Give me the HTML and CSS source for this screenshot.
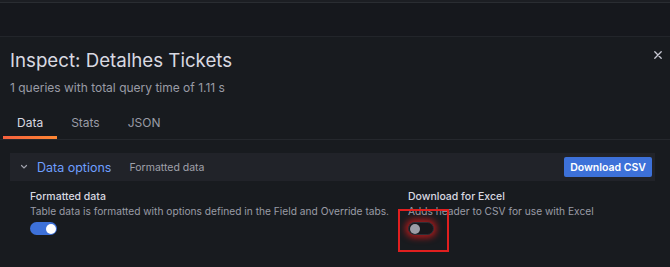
FILE: index.html
```html
<!DOCTYPE html>
<html>
<head>
    <title>Inspect: Detalhes Tickets</title>
    <meta name="viewport" content="width=device-width, initial-scale=1">
    <link rel="stylesheet" href="styles.css">
</head>
<body>
    <div class="topbar">
        <div class="topbar-line"></div>
    </div>

    <div class="drawer">
        <div class="drawer-header">
            <div>
                <h1 class="drawer-title">Inspect: Detalhes Tickets</h1>
                <div class="drawer-subtitle">1 queries with total query time of 1.11 s</div>
            </div>
            <button class="close-btn" title="Close">
                <svg width="8" height="8" viewBox="0 0 8 8">
                    <path d="M0.8 0.8 L7.2 7.2 M7.2 0.8 L0.8 7.2" stroke="#c8c9d3" stroke-width="1.3" stroke-linecap="round"/>
                </svg>
            </button>
        </div>

        <div class="tabs">
            <div class="tab active">Data</div>
            <div class="tab">Stats</div>
            <div class="tab">JSON</div>
        </div>

        <div class="content">
            <div class="options-bar">
                <svg class="chevron" width="8" height="6" viewBox="0 0 8 6">
                    <path d="M1.5 1.5 L4 4 L6.5 1.5" stroke="#9fa1ab" stroke-width="1.2" fill="none" stroke-linecap="round"/>
                </svg>
                <span class="options-title">Data options</span>
                <span class="options-summary">Formatted data</span>
                <button class="btn-primary">Download CSV</button>
            </div>

            <div class="fields">
                <div class="field">
                    <div class="field-label">Formatted data</div>
                    <div class="field-desc">Table data is formatted with options defined in the Field and Override tabs.</div>
                    <span class="switch on"><span class="knob"></span></span>
                </div>
                <div class="field field-last">
                    <div class="field-label">Download for Excel</div>
                    <div class="field-desc">Adds header to CSV for use with Excel</div>
                    <span class="switch off"><span class="knob"></span></span>
                    <span class="highlight-box"></span>
                </div>
            </div>
        </div>
    </div>
</body>
</html>
```

FILE: styles.css
```css
body {
    margin: 0;
    background: #111217;
    font-family: Inter, "Noto Sans", sans-serif;
    color: #ccccdc;
    height: 267px;
    overflow: hidden;
}
.topbar {
    height: 36px;
    background: #16181d;
}
.topbar-line {
    height: 2px;
    background: #1c1e23;
    border-bottom: 1px solid #2a2d32;
}
.drawer {
    background: #181b1f;
    border-top: 1px solid #22252a;
    height: 230px;
}
.drawer-header {
    display: flex;
    justify-content: space-between;
    padding: 11px 8px 0 10px;
}
.drawer-title {
    margin: 0;
    font-size: 18.7px;
    font-weight: 400;
    line-height: 26px;
    color: #d8d9e1;
}
.drawer-subtitle {
    margin-top: 6px;
    font-size: 12px;
    line-height: 16px;
    color: #9a9ba6;
}
.close-btn {
    background: none;
    border: none;
    padding: 0;
    margin-top: 3px;
    height: 8px;
    line-height: 0;
    cursor: pointer;
}
.tabs {
    display: flex;
    margin-top: 12px;
    border-bottom: 1px solid #25282d;
}
.tab {
    font-size: 12px;
    line-height: 16px;
    padding: 7px 14px 8px 14px;
    color: #9a9ba6;
}
.tab:first-child {
    margin-left: 3px;
}
.tab.active {
    color: #d8d9e1;
    padding-bottom: 5px;
    border-bottom: 3px solid #ff6a33;
    border-image: linear-gradient(90deg, #f55f3e, #ff8833) 1;
}
.content {
    padding: 13px 15px 0 10px;
}
.options-bar {
    display: flex;
    align-items: center;
    height: 28px;
    background: #212329;
    padding: 0 3px 0 10px;
}
.chevron {
    margin-right: 9px;
}
.options-title {
    font-size: 12.5px;
    color: #6e9fff;
    margin-right: 18px;
}
.options-summary {
    font-size: 10.5px;
    color: #a0a1ab;
    flex: 1;
}
.btn-primary {
    background: #3d71d9;
    color: #fff;
    border: none;
    border-radius: 2px;
    font-family: Inter, "Noto Sans", sans-serif;
    font-size: 10.5px;
    font-weight: 600;
    height: 20px;
    width: 88px;
    padding: 0;
}
.fields {
    display: flex;
    padding: 9px 0 0 20px;
}
.field {
    position: relative;
    flex: 0 0 378px;
}
.field-last {
    flex: 1;
    min-width: 0;
}
.field-desc {
    font-size: 10.2px;
    line-height: 14px;
    color: #9a9ba6;
    white-space: nowrap;
}
.field-label {
    font-size: 10.5px;
    font-weight: 500;
    line-height: 14px;
    color: #d8d9e1;
}
.switch {
    display: block;
    position: relative;
    width: 27px;
    height: 13px;
    border-radius: 7px;
    margin-top: 4px;
    box-sizing: border-box;
}
.switch.on {
    background: #3d71d9;
}
.switch.off {
    width: 26px;
    background: #16171b;
    border: 1px solid #2c2f36;
    box-shadow: 0 0 6px 3px rgba(225, 25, 25, 0.7);
}
.knob {
    position: absolute;
    top: 1.5px;
    width: 10px;
    height: 10px;
    border-radius: 50%;
}
.switch.on .knob {
    right: 1.5px;
    background: #ffffff;
}
.switch.off .knob {
    left: 1px;
    top: 0.5px;
    background: #9c9da6;
}
.highlight-box {
    position: absolute;
    left: -10px;
    top: 19px;
    width: 51px;
    height: 43px;
    box-sizing: border-box;
    border: 2px solid #e01f1f;
}
```
